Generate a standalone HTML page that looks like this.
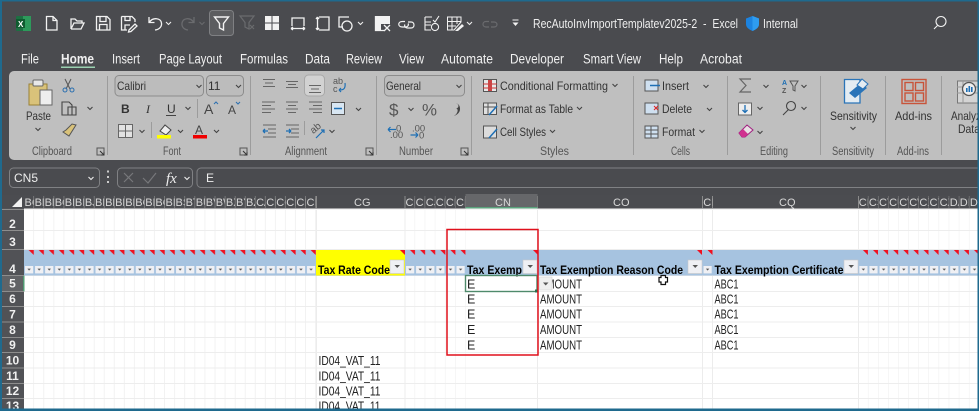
<!DOCTYPE html>
<html><head><meta charset="utf-8"><style>
html,body{margin:0;padding:0;background:#4a4b4f;width:979px;height:411px;overflow:hidden}
svg{display:block}
text{font-family:"Liberation Sans",sans-serif;white-space:pre}
.t{fill:#f0f0f0;font-size:13.5px}
.r{fill:#333;font-size:12px}
.s{fill:#555;font-size:11.5px}
.h{fill:#d8d8d8;font-size:11px}
.n{fill:#f0f0f0;font-size:12px;text-anchor:middle;font-weight:bold}
.c{fill:#222;font-size:12.5px}
.b{fill:#000;font-size:12px;font-weight:bold}
.w{fill:none;stroke:#f2f2f2;stroke-width:1.3}
.k{fill:none;stroke:#444;stroke-width:1.1}
.g{fill:none;stroke:#666;stroke-width:1}
.sep{stroke:#9c9c9c;stroke-width:1}
</style></head><body>
<svg width="979" height="411" viewBox="0 0 979 411" xmlns="http://www.w3.org/2000/svg" style="filter:blur(.3px)">
<defs>
<path id="cv" d="M-2.5-1L0 1.5L2.5-1" fill="none" stroke="#444" stroke-width="1.1"/>
<path id="cw" d="M-2.5-1L0 1.5L2.5-1" fill="none" stroke="#eee" stroke-width="1.1"/>
<g id="lau"><rect x="0" y="0" width="7" height="7" fill="none" stroke="#555"/><path d="M3 3L7 7M7 4V7H4" stroke="#333" fill="none"/></g>
<pattern id="vg" patternUnits="userSpaceOnUse" x="24" y="0" width="10.07" height="10"><rect x="9.4" width=".9" height="10" fill="#ececec"/></pattern>
<pattern id="vh" patternUnits="userSpaceOnUse" x="24" y="0" width="10.07" height="10"><rect x="9.4" width=".9" height="10" fill="#8b8b8b"/></pattern>
<pattern id="tr" patternUnits="userSpaceOnUse" x="24" y="250" width="10.07" height="6"><path d="M4.6 0H9.8V5Z" fill="#f01020"/></pattern>
<pattern id="dd" patternUnits="userSpaceOnUse" x="24" y="265" width="10.07" height="10"><rect x="1" y="1" width="8.2" height="7.4" fill="#eff0f4"/><path d="M3.4 3.6H6.8L5.1 5.6Z" fill="#555"/></pattern>
<pattern id="vg2" patternUnits="userSpaceOnUse" x="405" y="0" width="10.1" height="10"><rect x="9.6" width=".9" height="10" fill="#ececec"/></pattern>
<pattern id="vh2" patternUnits="userSpaceOnUse" x="405" y="0" width="10.1" height="10"><rect x="9.6" width=".9" height="10" fill="#8b8b8b"/></pattern>
<pattern id="tr2" patternUnits="userSpaceOnUse" x="405" y="250" width="10.1" height="6"><path d="M5 0H10V5Z" fill="#f01020"/></pattern>
<pattern id="dd2" patternUnits="userSpaceOnUse" x="405" y="265" width="10.1" height="10"><rect x="1" y="1" width="8.2" height="7.4" fill="#eff0f4"/><path d="M3.4 3.6H6.8L5.1 5.6Z" fill="#555"/></pattern>
<pattern id="vg3" patternUnits="userSpaceOnUse" x="858.3" y="0" width="10.1" height="10"><rect x="9.6" width=".9" height="10" fill="#ececec"/></pattern>
<pattern id="vh3" patternUnits="userSpaceOnUse" x="858.3" y="0" width="10.1" height="10"><rect x="9.6" width=".9" height="10" fill="#8b8b8b"/></pattern>
<pattern id="tr3" patternUnits="userSpaceOnUse" x="858.3" y="250" width="10.1" height="6"><path d="M4.6 0H9.6V5Z" fill="#f01020"/></pattern>
<pattern id="dd3" patternUnits="userSpaceOnUse" x="858.3" y="265" width="10.1" height="10"><rect x="1" y="1" width="8.2" height="7.4" fill="#eff0f4"/><path d="M3.4 3.6H6.8L5.1 5.6Z" fill="#555"/></pattern>
</defs>

<!-- background -->
<rect width="979" height="411" fill="#4a4b4f"/>

<!-- QAT -->
<rect x="16" y="16" width="15" height="15" rx="1" fill="#1d6f42"/><rect x="23" y="16" width="8" height="15" fill="#2d9a5b"/><rect x="16" y="19" width="9" height="9" fill="#0f5c30"/><text x="18" y="27" font-size="8" font-weight="bold" fill="#fff">X</text>
<path class="w" d="M46.5 16.5H53L57 20.5V30H46.5ZM53 16.5V20.5H57"/>
<path class="w" d="M71 29V19H75L77 21H82V23M71 29H81L84 23H74L71 29"/>
<path class="w" d="M96.5 16.5H107L110 19.5V30H96.5ZM100 16.5V21.5H106V16.5M99.5 30V24.5H107V30"/>
<path class="w" d="M121.5 16.5H132L135 19.5V22M125 16.5V20.5H130V16.5M121.5 16.5V30H127M125 30V25H130M129 30L135 24L137 26L131 31.5L128.5 32Z"/>
<path class="w" d="M149 17V22.5H154.5M149.5 22C153 17 161 18 161.5 23C162 27 159 29.5 155 30"/>
<use href="#cw" x="168.5" y="23"/>
<path d="M194 17V22.5H188.5M193.5 22C190 17 183 18 182 23C181.5 27 184 29.5 188 30" fill="none" stroke="#6a6b6e" stroke-width="1.3"/>
<path d="M-2.5-1L0 1.5L2.5-1" transform="translate(202 23)" fill="none" stroke="#6a6b6e"/>
<rect x="209.5" y="10.5" width="24" height="25" rx="3" fill="#5c5d60" stroke="#7f8083"/>
<path d="M214.5 17H228.5L223.5 23.5V30L219.5 28V23.5Z" fill="none" stroke="#f2f2f2" stroke-width="1.4"/>
<path d="M240 16H254L249 22.5V29L245 27V22.5Z M250 25L254 29M254 25L250 29" fill="none" stroke="#6a6b6e" stroke-width="1.2"/>
<path d="M265 16H271.5V22.5H265ZM272.5 16H279V22.5H272.5ZM265 23.5H271.5V30H265ZM272.5 23.5H279V30H272.5Z" fill="#f2f2f2"/>
<path class="w" d="M292 26V18H304V26M291 28.5H305M291 28.5L293 27M291 28.5L293 30M305 28.5L303 27M305 28.5L303 30" stroke-width="1.1"/>
<path class="w" d="M319 17H329V30H319M317.5 17V30M317.5 17L316 19M317.5 17L319 19M317.5 30L316 28M317.5 30L319 28" stroke-width="1.1"/>
<path class="w" d="M349 17H339V27H343" stroke-width="1.1"/><circle cx="347" cy="26" r="5" class="w" stroke-width="1.1"/>
<use href="#cw" x="360.5" y="23"/>
<path d="M375 16H390V24H375Z" fill="#f2f2f2"/><path class="w" d="M375.5 16V30.5H384"/><rect x="376" y="24" width="5" height="6" fill="#f2f2f2"/><path class="w" d="M384 25L390 31M390 25L384 31" stroke-width="1.1"/>
<path d="M405 21.5H402.5C397.5 21.5 397.5 27 402.5 27H405C408 27 409 25 408 23.5M408 22H411C415 22 415 28 411 28H408C405 28 404 26 405 24.5" fill="none" stroke="#f2f2f2" stroke-width="1.2"/>
<path d="M425 17H432M425 17V22H431M425 25H431M425 22V30H431M433 20L435 22L439 16" fill="none" stroke="#f2f2f2" stroke-width="1.1"/><circle cx="435" cy="27" r="3.6" fill="none" stroke="#f2f2f2" stroke-width="1.1"/>
<path d="M447.5 17H461V22L454 30H447.5ZM452 17V30M457 17V24M447.5 21.5H461M447.5 26H456" fill="none" stroke="#f2f2f2" stroke-width="1"/><path d="M455 31L462 24L464 26L458 31Z" fill="#f2f2f2"/>
<use href="#cw" x="469.5" y="23"/>
<path d="M489 21.5H486C482 21.5 482 27 486 27H489M491 22H494C498 22 498 27 494 27H491" fill="none" stroke="#6a6b6e" stroke-width="1.2"/>
<path d="M512.5 20H518.5" fill="none" stroke="#f2f2f2" stroke-width="1"/><path d="M512.5 22.5H518.5L515.5 26Z" fill="#f2f2f2"/>
<text x="533" y="28" font-size="12.5" fill="#eee" textLength="205" lengthAdjust="spacingAndGlyphs">RecAutoInvImportTemplatev2025-2  -  Excel</text>
<path d="M746 18.5L752.5 16L759 18.5V24C759 27.5 756 29.5 752.5 31C749 29.5 746 27.5 746 24Z" fill="#1c83e0"/><path d="M752.5 16L759 18.5V24C759 27.5 756 29.5 752.5 31Z" fill="#2e9cf0"/>
<text x="763" y="28" font-size="12.5" fill="#eee" textLength="35" lengthAdjust="spacingAndGlyphs">Internal</text>
<circle cx="941" cy="21.5" r="5" fill="none" stroke="#f2f2f2" stroke-width="1.1"/><path d="M937.5 25.5L934 29" fill="none" stroke="#f2f2f2" stroke-width="1.1"/>

<!-- Tabs -->
<text class="t" x="21" y="63.5" textLength="18" lengthAdjust="spacingAndGlyphs">File</text>
<text class="t" x="61" y="63.5" textLength="33" lengthAdjust="spacingAndGlyphs" style="font-weight:bold">Home</text>
<rect x="61" y="66.5" width="34" height="1.5" fill="#9ad0b0"/>
<text class="t" x="112" y="63.5" textLength="28" lengthAdjust="spacingAndGlyphs">Insert</text>
<text class="t" x="159" y="63.5" textLength="63" lengthAdjust="spacingAndGlyphs">Page Layout</text>
<text class="t" x="240" y="63.5" textLength="48" lengthAdjust="spacingAndGlyphs">Formulas</text>
<text class="t" x="305" y="63.5" textLength="25" lengthAdjust="spacingAndGlyphs">Data</text>
<text class="t" x="346" y="63.5" textLength="36" lengthAdjust="spacingAndGlyphs">Review</text>
<text class="t" x="399" y="63.5" textLength="25" lengthAdjust="spacingAndGlyphs">View</text>
<text class="t" x="441" y="63.5" textLength="52" lengthAdjust="spacingAndGlyphs">Automate</text>
<text class="t" x="510" y="63.5" textLength="54" lengthAdjust="spacingAndGlyphs">Developer</text>
<text class="t" x="583" y="63.5" textLength="58" lengthAdjust="spacingAndGlyphs">Smart View</text>
<text class="t" x="659" y="63.5" textLength="24" lengthAdjust="spacingAndGlyphs">Help</text>
<text class="t" x="700" y="63.5" textLength="42" lengthAdjust="spacingAndGlyphs">Acrobat</text>

<!-- Ribbon -->
<rect x="9" y="71" width="980" height="89" rx="5" fill="#bfbfbf"/>
<g class="sep">
<path d="M107.5 76V155M250.5 76V155M376.5 76V155M471.5 76V155M633.5 76V155M727.5 76V155M820.5 76V155M885.5 76V155M941.5 76V155M197.5 99V118M151.5 122V138M304.5 121V135"/>
</g>
<!-- Clipboard -->
<rect x="29" y="84" width="18" height="21" fill="#d9c27a" stroke="#9a8236"/><rect x="33" y="80" width="10" height="6" rx="1" fill="#e8e8e8" stroke="#666"/><rect x="40" y="90" width="12" height="15" fill="#eee" stroke="#666"/>
<text class="r" x="26" y="120" textLength="25" lengthAdjust="spacingAndGlyphs">Paste</text>
<use href="#cv" x="38" y="129"/>
<path d="M65 79L70 89M71 79L66 89" stroke="#555" fill="none"/><circle cx="65" cy="90" r="2" fill="none" stroke="#2a6fb0"/><circle cx="72" cy="90" r="2" fill="none" stroke="#2a6fb0"/>
<path class="k" d="M62 102H69L72 105V115H62Z M68 107H76V115H68Z"/>
<use href="#cv" x="90" y="108"/>
<path d="M63 132L69 136L76 125L72 124L66 130Z" fill="#d9c27a" stroke="#555"/>
<text class="s" x="32" y="155" textLength="40" lengthAdjust="spacingAndGlyphs">Clipboard</text>
<use href="#lau" x="97" y="148"/>
<!-- Font -->
<rect x="115" y="75.5" width="88.5" height="20.5" rx="4" fill="#bcbcbc" stroke="#8c8c8c"/>
<text class="r" x="117" y="90" textLength="29" lengthAdjust="spacingAndGlyphs">Calibri</text><use href="#cv" x="199" y="86"/>
<rect x="206.5" y="75.5" width="37" height="20.5" rx="4" fill="#bcbcbc" stroke="#8c8c8c"/>
<text class="r" x="208" y="90">11</text><use href="#cv" x="238.5" y="86"/>
<text class="r" x="121" y="113" style="font-weight:bold">B</text>
<text class="r" x="146" y="113" style="font-style:italic;font-family:'Liberation Serif'">I</text>
<text class="r" x="167" y="113">U</text><path d="M166 115.5H176" stroke="#444"/>
<use href="#cv" x="188" y="108"/>
<text x="204" y="114" font-size="14" fill="#444">A</text><path d="M214 104L216 102L218 104" stroke="#2a6fb0" fill="none"/>
<text x="228" y="114" font-size="12" fill="#444">A</text><path d="M236 102L238 104L240 102" stroke="#2a6fb0" fill="none"/>
<rect x="118.5" y="124.5" width="14" height="13" fill="#e2e2e2" stroke="#666"/><path d="M125.5 124.5V137.5M118.5 131H132.5" stroke="#666"/>
<use href="#cv" x="142" y="131"/>
<path d="M160 131L165 125L171 130L166 135Z" fill="#eee" stroke="#444"/>
<rect x="157" y="135" width="14" height="3.5" fill="#ffff00"/><use href="#cv" x="180.5" y="131"/>
<text x="195" y="134" font-size="12" fill="#444">A</text><rect x="193" y="135" width="14" height="3.5" fill="#f00000"/><use href="#cv" x="216.5" y="131"/>
<text class="s" x="163" y="155" textLength="18" lengthAdjust="spacingAndGlyphs">Font</text>
<use href="#lau" x="240" y="148"/>
<!-- Alignment -->
<rect x="304.5" y="75" width="20" height="21" rx="4" fill="#d2d2d2" stroke="#a8a8a8"/>
<path class="g" d="M263 79.5H275M265 83H273M263 86.5H275M286 81.5H298M288 84.5H296M286 87.5H298M309 85.5H321M311 89H319M309 92.5H321"/>
<path class="g" d="M262 102H275M262 105.5H271M262 109H275M262 112.5H271M286 102H298M288 105.5H296M286 109H298M288 112.5H296M309 102H322M313 105.5H322M309 109H322M313 112.5H322"/>
<path class="g" d="M263 125H276M268 129H276M268 133H276M263 137H276M286 125H299M291 129H299M291 133H299M286 137H299"/>
<path d="M268 131H263M263 131L265 129M263 131L265 133" stroke="#1d6fb5" fill="none" stroke-width="1.3"/><path d="M286 131H291M291 131L289 129M291 131L289 133" stroke="#1d6fb5" fill="none" stroke-width="1.3"/>
<text x="333" y="84" font-size="9" fill="#555">ab</text><text x="333" y="92" font-size="9" fill="#555">c</text><path d="M345 83C346 90 342 90 339 90M339 90L341 88M339 90L341 92" stroke="#1d6fb5" fill="none" stroke-width="1.2"/>
<rect x="331.5" y="102.5" width="13" height="12" fill="#d8e6f2" stroke="#555"/><path d="M334 108.5H342" stroke="#1d6fb5" stroke-width="1.5"/>
<use href="#cv" x="358.5" y="109"/>
<text x="311" y="132" font-size="10" fill="#555" transform="rotate(-40 315 130)">ab</text><path d="M316 138L324 130M321 130H324V133" stroke="#1d6fb5" fill="none" stroke-width="1.2"/>
<use href="#cv" x="332" y="131"/>
<text class="s" x="285" y="155" textLength="42" lengthAdjust="spacingAndGlyphs">Alignment</text>
<use href="#lau" x="366" y="148"/>
<!-- Number -->
<rect x="384.5" y="75.5" width="80" height="20.5" rx="4" fill="#bcbcbc" stroke="#8c8c8c"/>
<text class="r" x="386" y="90" textLength="35" lengthAdjust="spacingAndGlyphs">General</text><use href="#cv" x="459" y="86"/>
<text x="389" y="115.5" font-size="17" fill="#555">$</text><use href="#cv" x="411" y="109"/>
<text x="422" y="115.5" font-size="17" fill="#555" textLength="15" lengthAdjust="spacingAndGlyphs">%</text>
<path d="M456 103.5A2.5 2.5 0 1 1 455.9 108.5C458.5 108.5 458.5 113 454 116C459.5 114 461 110 459.5 106C458.5 104 457 103.5 456 103.5Z" fill="#444"/>
<text x="396" y="131.5" font-size="9.5" fill="#555">0</text><text x="390" y="138" font-size="9.5" fill="#555">.00</text>
<path d="M388 129.5H396M388 129.5L390.5 127M388 129.5L390.5 132" stroke="#1d6fb5" fill="none" stroke-width="1.2"/>
<text x="412" y="131.5" font-size="9.5" fill="#555">.00</text><text x="419" y="138.5" font-size="9.5" fill="#555">0</text>
<path d="M410.5 135H418M418 135L415.5 132.5M418 135L415.5 137.5" stroke="#1d6fb5" fill="none" stroke-width="1.2"/>
<text class="s" x="399" y="155" textLength="34" lengthAdjust="spacingAndGlyphs">Number</text>
<use href="#lau" x="461" y="148"/>
<!-- Styles -->
<rect x="483.5" y="79.5" width="13" height="12" fill="#e8e8e8" stroke="#555"/><path d="M483 84H497M483 88H497" stroke="#c33"/><rect x="488" y="80" width="4" height="11" fill="#c44"/>
<text class="r" x="500" y="90" textLength="108" lengthAdjust="spacingAndGlyphs">Conditional Formatting</text><use href="#cv" x="615" y="85"/>
<rect x="483.5" y="103" width="13" height="11.5" fill="#e0e0e0" stroke="#555"/><path d="M483 107H497M488 103V114" stroke="#555"/><path d="M489 115L497 106" stroke="#1d6fb5" stroke-width="1.5"/>
<text class="r" x="500" y="113" textLength="73" lengthAdjust="spacingAndGlyphs">Format as Table</text><use href="#cv" x="579.5" y="108"/>
<rect x="483.5" y="126" width="13" height="12" fill="#dcdcdc" stroke="#555"/><path d="M489 138L497 129" stroke="#1d6fb5" stroke-width="1.5"/>
<text class="r" x="500" y="136" textLength="46" lengthAdjust="spacingAndGlyphs">Cell Styles</text><use href="#cv" x="552.5" y="131"/>
<text class="s" x="540" y="155" textLength="29" lengthAdjust="spacingAndGlyphs">Styles</text>
<!-- Cells -->
<rect x="645" y="80" width="13" height="11" fill="#cfe0f0" stroke="#555"/><path d="M650 85.5H660" stroke="#1d6fb5" stroke-width="1.5"/>
<text class="r" x="662" y="90" textLength="27" lengthAdjust="spacingAndGlyphs">Insert</text><use href="#cv" x="706" y="86"/>
<rect x="645" y="103" width="13" height="11" fill="#cfe0f0" stroke="#555"/><path d="M654 106L658 110M658 106L654 110" stroke="#d22"/>
<text class="r" x="662" y="113" textLength="30" lengthAdjust="spacingAndGlyphs">Delete</text><use href="#cv" x="709.5" y="109"/>
<rect x="645" y="126" width="13" height="12" fill="#cfe0f0" stroke="#555"/><path d="M645 130H658M645 134H658M651 126V138" stroke="#555"/>
<text class="r" x="662" y="136" textLength="33" lengthAdjust="spacingAndGlyphs">Format</text><use href="#cv" x="702" y="131"/>
<text class="s" x="671" y="155" textLength="19" lengthAdjust="spacingAndGlyphs">Cells</text>
<!-- Editing -->
<path d="M751 79H740L746 85.5L740 92H751" fill="none" stroke="#666" stroke-width="1.2"/><use href="#cv" x="766" y="86"/>
<text x="782" y="85" font-size="7" fill="#1d6fb5" font-weight="bold">A</text><text x="782" y="93" font-size="7" fill="#555" font-weight="bold">Z</text>
<path d="M790 81H798L795 86V91L793 90V86Z" fill="none" stroke="#555"/><use href="#cv" x="804" y="86"/>
<rect x="738.5" y="103" width="13" height="12" fill="#eee" stroke="#666"/><path d="M745 105V112M742.5 110L745 112.5L747.5 110" stroke="#1d6fb5" fill="none" stroke-width="1.3"/><use href="#cv" x="760" y="108"/>
<circle cx="791" cy="106" r="4.5" class="k"/><path class="k" d="M788 110L783 115"/><use href="#cv" x="804" y="108"/>
<path d="M739 133L747 125L753 130L745 137L742 137Z" fill="#e8e0e4" stroke="#a02080"/><path d="M739 133L743 129L748 134L745 137H742Z" fill="#d0308f"/><use href="#cv" x="760" y="132"/>
<text class="s" x="760" y="155" textLength="28" lengthAdjust="spacingAndGlyphs">Editing</text>
<!-- Sensitivity -->
<path d="M844.5 79.5H860V103H844.5Z" fill="#e4ecf2" stroke="#2a74b8" stroke-width="1.3"/>
<path d="M849 93L861 83L867 88L855 98Z" fill="#2a74b8"/><path d="M857 85L862 79L868 84L863 89Z" fill="#e4ecf2" stroke="#2a74b8"/>
<text class="r" x="830" y="120" textLength="47" lengthAdjust="spacingAndGlyphs">Sensitivity</text><use href="#cv" x="853" y="128"/>
<text class="s" x="832" y="155" textLength="42" lengthAdjust="spacingAndGlyphs">Sensitivity</text>
<!-- Add-ins -->
<g fill="none" stroke="#c8543a" stroke-width="1.4"><rect x="902" y="79.5" width="24" height="24"/><rect x="905" y="82.5" width="8" height="8"/><rect x="915.5" y="82.5" width="8" height="8"/><rect x="905" y="93" width="8" height="8"/><rect x="915.5" y="93" width="8" height="8"/></g>
<text class="r" x="895" y="120" textLength="37" lengthAdjust="spacingAndGlyphs">Add-ins</text>
<text class="s" x="897" y="155" textLength="32" lengthAdjust="spacingAndGlyphs">Add-ins</text>
<!-- Analyze -->
<rect x="957.5" y="81" width="22" height="22" fill="#d4d4d4" stroke="#777"/><path d="M957 87H979M957 93H979M963 81V103" stroke="#999"/>
<circle cx="969" cy="89" r="6.5" fill="#eee" stroke="#555" stroke-width="1.3"/><rect x="966" y="88" width="1.6" height="4" fill="#1d6fb5"/><rect x="968.5" y="86" width="1.6" height="6" fill="#1d6fb5"/><rect x="971" y="87" width="1.6" height="5" fill="#1d6fb5"/>
<text class="r" x="951" y="120" textLength="30" lengthAdjust="spacingAndGlyphs">Analyz</text>
<text class="r" x="958" y="133" textLength="22" lengthAdjust="spacingAndGlyphs">Data</text>

<!-- Formula bar -->
<rect x="9.5" y="168" width="90" height="19.5" rx="4" fill="#4a4b4f" stroke="#808184"/>
<text x="14" y="182" font-size="12" fill="#eee">CN5</text><use href="#cw" x="91" y="178"/>
<rect x="107" y="170.5" width="2" height="2" fill="#ccc"/><rect x="107" y="176" width="2" height="2" fill="#ccc"/><rect x="107" y="181" width="2" height="2" fill="#ccc"/>
<rect x="117.5" y="168" width="75" height="19.5" rx="4" fill="#4a4b4f" stroke="#808184"/>
<path d="M124 173L133 182M133 173L124 182" stroke="#77787b" fill="none" stroke-width="1.2"/>
<path d="M143 178L148 183L156 173" stroke="#77787b" fill="none" stroke-width="1.2"/>
<text x="166" y="183" font-size="15" fill="#eee" style="font-family:'Liberation Serif';font-style:italic">fx</text><use href="#cw" x="187" y="178"/>
<rect x="197" y="168" width="790" height="19.5" rx="4" fill="#4a4b4f" stroke="#808184"/>
<text x="206" y="182" font-size="12" fill="#eee">E</text>

<!-- Sheet -->
<rect x="24" y="209" width="955" height="200" fill="#fff"/>
<rect x="24" y="209" width="292" height="200" fill="url(#vg)"/>
<rect x="405" y="209" width="60.5" height="200" fill="url(#vg2)"/>
<rect x="858.3" y="209" width="121" height="200" fill="url(#vg3)"/>
<path d="M537.5 209V411M702.5 209V411M712.5 209V411M858.5 209V411M316.5 209V411M405 209V411" stroke="#ececec" fill="none"/>
<path d="M24 230.5H979M24 249.5H979M24 291.5H979M24 306.5H979M24 322H979M24 337.5H979M24 352.5H979M24 368H979M24 383.5H979M24 398.5H979" stroke="#ededed" fill="none"/>
<rect x="24" y="208" width="955" height="2" fill="#f4f4f4"/>

<!-- column headers -->
<rect x="2" y="195" width="977" height="13.5" fill="#4b4c50"/>
<rect x="24" y="196" width="292" height="12" fill="url(#vh)"/>
<rect x="405" y="196" width="60.5" height="12" fill="url(#vh2)"/>
<rect x="858.3" y="196" width="121" height="12" fill="url(#vh3)"/>
<path d="M316.5 196V208M537.5 196V208M702.5 196V208M712.5 196V208M858.5 196V208M405 196V208" stroke="#8b8b8b"/>
<rect x="465.5" y="194" width="72" height="14" fill="#66676a"/><rect x="465.5" y="207" width="72" height="1.5" fill="#5aa27c"/>
<path d="M12 207L22 197V207Z" fill="#f2f2f2"/>
<svg x="24" y="196" width="9.5" height="12"><text class="h" x=".5" y="10">BC</text></svg>
<svg x="34.1" y="196" width="9.5" height="12"><text class="h" x=".5" y="10">BE</text></svg>
<svg x="44.1" y="196" width="9.5" height="12"><text class="h" x=".5" y="10">BF</text></svg>
<svg x="54.2" y="196" width="9.5" height="12"><text class="h" x=".5" y="10">BG</text></svg>
<svg x="64.3" y="196" width="9.5" height="12"><text class="h" x=".5" y="10">BH</text></svg>
<svg x="74.4" y="196" width="9.5" height="12"><text class="h" x=".5" y="10">BI</text></svg>
<svg x="84.4" y="196" width="9.5" height="12"><text class="h" x=".5" y="10">BJ</text></svg>
<svg x="94.5" y="196" width="9.5" height="12"><text class="h" x=".5" y="10">BK</text></svg>
<svg x="104.6" y="196" width="9.5" height="12"><text class="h" x=".5" y="10">BL</text></svg>
<svg x="114.6" y="196" width="9.5" height="12"><text class="h" x=".5" y="10">BM</text></svg>
<svg x="124.7" y="196" width="9.5" height="12"><text class="h" x=".5" y="10">BN</text></svg>
<svg x="134.8" y="196" width="9.5" height="12"><text class="h" x=".5" y="10">BO</text></svg>
<svg x="144.8" y="196" width="9.5" height="12"><text class="h" x=".5" y="10">BP</text></svg>
<svg x="154.9" y="196" width="9.5" height="12"><text class="h" x=".5" y="10">BQ</text></svg>
<svg x="165" y="196" width="9.5" height="12"><text class="h" x=".5" y="10">BR</text></svg>
<svg x="175" y="196" width="9.5" height="12"><text class="h" x=".5" y="10">BS</text></svg>
<svg x="185.1" y="196" width="9.5" height="12"><text class="h" x=".5" y="10">BT</text></svg>
<svg x="195.2" y="196" width="9.5" height="12"><text class="h" x=".5" y="10">BU</text></svg>
<svg x="205.3" y="196" width="9.5" height="12"><text class="h" x=".5" y="10">BV</text></svg>
<svg x="215.3" y="196" width="9.5" height="12"><text class="h" x=".5" y="10">BW</text></svg>
<svg x="225.4" y="196" width="9.5" height="12"><text class="h" x=".5" y="10">BX</text></svg>
<svg x="235.5" y="196" width="9.5" height="12"><text class="h" x=".5" y="10">BY</text></svg>
<svg x="245.5" y="196" width="9.5" height="12"><text class="h" x=".5" y="10">BZ</text></svg>
<svg x="255.6" y="196" width="9.5" height="12"><text class="h" x=".5" y="10">CA</text></svg>
<svg x="265.7" y="196" width="9.5" height="12"><text class="h" x=".5" y="10">CB</text></svg>
<svg x="275.8" y="196" width="9.5" height="12"><text class="h" x=".5" y="10">CC</text></svg>
<svg x="285.8" y="196" width="9.5" height="12"><text class="h" x=".5" y="10">CD</text></svg>
<svg x="295.9" y="196" width="9.5" height="12"><text class="h" x=".5" y="10">CE</text></svg>
<svg x="306" y="196" width="9.5" height="12"><text class="h" x=".5" y="10">CF</text></svg>
<text class="h" x="354" y="206">CG</text>
<svg x="405" y="196" width="9.5" height="12"><text class="h" x=".5" y="10">CH</text></svg>
<svg x="415.1" y="196" width="9.5" height="12"><text class="h" x=".5" y="10">CI</text></svg>
<svg x="425.2" y="196" width="9.5" height="12"><text class="h" x=".5" y="10">CJ</text></svg>
<svg x="435.3" y="196" width="9.5" height="12"><text class="h" x=".5" y="10">CK</text></svg>
<svg x="445.4" y="196" width="9.5" height="12"><text class="h" x=".5" y="10">CL</text></svg>
<svg x="455.5" y="196" width="9.5" height="12"><text class="h" x=".5" y="10">CM</text></svg>
<text class="h" x="495" y="206">CN</text>
<text class="h" x="613" y="206">CO</text>
<svg x="702.7" y="196" width="9.5" height="12"><text class="h" x=".5" y="10">CP</text></svg>
<text class="h" x="779" y="206">CQ</text>
<svg x="858.3" y="196" width="9.5" height="12"><text class="h" x=".5" y="10">CR</text></svg>
<svg x="868.4" y="196" width="9.5" height="12"><text class="h" x=".5" y="10">CS</text></svg>
<svg x="878.5" y="196" width="9.5" height="12"><text class="h" x=".5" y="10">CT</text></svg>
<svg x="888.6" y="196" width="9.5" height="12"><text class="h" x=".5" y="10">CU</text></svg>
<svg x="898.7" y="196" width="9.5" height="12"><text class="h" x=".5" y="10">CV</text></svg>
<svg x="908.8" y="196" width="9.5" height="12"><text class="h" x=".5" y="10">CW</text></svg>
<svg x="918.9" y="196" width="9.5" height="12"><text class="h" x=".5" y="10">CX</text></svg>
<svg x="929" y="196" width="9.5" height="12"><text class="h" x=".5" y="10">CY</text></svg>
<svg x="939.1" y="196" width="9.5" height="12"><text class="h" x=".5" y="10">CZ</text></svg>
<svg x="949.2" y="196" width="9.5" height="12"><text class="h" x=".5" y="10">DA</text></svg>
<svg x="959.3" y="196" width="9.5" height="12"><text class="h" x=".5" y="10">DB</text></svg>
<svg x="969.4" y="196" width="9.5" height="12"><text class="h" x=".5" y="10">DC</text></svg>

<!-- Row 4 band -->
<rect x="24" y="250" width="955" height="25.5" fill="#a6c3e0"/>
<rect x="24" y="275" width="955" height="1" fill="#c9d6e4"/>
<rect x="316" y="250" width="89" height="25.5" fill="#ffff00"/>
<rect x="24" y="250" width="292" height="6" fill="url(#tr)"/>
<rect x="405" y="250" width="60.5" height="6" fill="url(#tr2)"/>
<rect x="858.3" y="250" width="121" height="6" fill="url(#tr3)"/>
<path d="M400 250H405V255ZM533 250H538V255ZM697 250H702V255ZM707.5 250H712.5V255Z" fill="#f01020"/>
<rect x="24" y="265" width="292" height="10" fill="url(#dd)"/>
<rect x="405" y="265" width="60.5" height="10" fill="url(#dd2)"/>
<rect x="858.3" y="265" width="121" height="10" fill="url(#dd3)"/>
<!-- filter buttons -->
<rect x="390" y="260" width="14" height="13.5" fill="#eff0f4" stroke="#c8c8c8" stroke-width=".6"/><path d="M394.5 265H400L397.2 268Z" fill="#555"/>
<rect x="523" y="260" width="14" height="13.5" fill="#eff0f4" stroke="#c8c8c8" stroke-width=".6"/><path d="M527.5 265H533L530.2 268Z" fill="#555"/>
<rect x="688" y="260" width="14" height="13.5" fill="#eff0f4" stroke="#c8c8c8" stroke-width=".6"/><path d="M692.5 265H698L695.2 268Z" fill="#555"/>
<rect x="844" y="260" width="14" height="13.5" fill="#eff0f4" stroke="#c8c8c8" stroke-width=".6"/><path d="M848.5 265H854L851.2 268Z" fill="#555"/>
<rect x="703.5" y="266" width="8.2" height="7.4" fill="#eff0f4"/><path d="M705.9 268.6H709.3L707.6 270.6Z" fill="#555"/>
<text class="b" x="318" y="274" textLength="72" lengthAdjust="spacingAndGlyphs">Tax Rate Code</text>
<text class="b" x="467" y="274" textLength="55" lengthAdjust="spacingAndGlyphs">Tax Exemp</text>
<text class="b" x="540" y="274" textLength="143" lengthAdjust="spacingAndGlyphs">Tax Exemption Reason Code</text>
<text class="b" x="714.5" y="274" textLength="129" lengthAdjust="spacingAndGlyphs">Tax Exemption Certificate</text>

<!-- Cells -->
<text class="c" x="467" y="288.5">E</text><text class="c" x="540" y="288.5" textLength="42" lengthAdjust="spacingAndGlyphs">AMOUNT</text><text class="c" x="714.5" y="288.5" textLength="24" lengthAdjust="spacingAndGlyphs">ABC1</text>
<text class="c" x="467" y="303.5">E</text><text class="c" x="540" y="303.5" textLength="42" lengthAdjust="spacingAndGlyphs">AMOUNT</text><text class="c" x="714.5" y="303.5" textLength="24" lengthAdjust="spacingAndGlyphs">ABC1</text>
<text class="c" x="467" y="318.5">E</text><text class="c" x="540" y="318.5" textLength="42" lengthAdjust="spacingAndGlyphs">AMOUNT</text><text class="c" x="714.5" y="318.5" textLength="24" lengthAdjust="spacingAndGlyphs">ABC1</text>
<text class="c" x="467" y="334">E</text><text class="c" x="540" y="334" textLength="42" lengthAdjust="spacingAndGlyphs">AMOUNT</text><text class="c" x="714.5" y="334" textLength="24" lengthAdjust="spacingAndGlyphs">ABC1</text>
<text class="c" x="467" y="349.5">E</text><text class="c" x="540" y="349.5" textLength="42" lengthAdjust="spacingAndGlyphs">AMOUNT</text><text class="c" x="714.5" y="349.5" textLength="24" lengthAdjust="spacingAndGlyphs">ABC1</text>
<text class="c" x="318.5" y="365" textLength="62" lengthAdjust="spacingAndGlyphs">ID04_VAT_11</text>
<text class="c" x="318.5" y="380.5" textLength="62" lengthAdjust="spacingAndGlyphs">ID04_VAT_11</text>
<text class="c" x="318.5" y="395.5" textLength="62" lengthAdjust="spacingAndGlyphs">ID04_VAT_11</text>
<text class="c" x="318.5" y="410.5" textLength="62" lengthAdjust="spacingAndGlyphs">ID04_VAT_11</text>

<!-- Selection -->
<rect x="465.5" y="275.5" width="71.5" height="16" fill="none" stroke="#4f8a6b" stroke-width="1.4"/>
<rect x="535" y="289.5" width="3" height="3" fill="#2f6f4f"/>
<rect x="539.5" y="277" width="12.5" height="13" fill="#efefef" stroke="#d4d4d4" stroke-width=".6"/><path d="M543 282.5H548.5L545.7 285.5Z" fill="#555"/>
<!-- Red annotation -->
<rect x="447" y="229.5" width="91" height="125.5" fill="none" stroke="#e0101c" stroke-width="1.5"/>
<!-- Cursor -->
<path d="M661 275.5H665.5V277.5H667.5V282H665.5V284.5H661V282H659V277.5H661Z" fill="#fff" stroke="#111" stroke-width="1.2"/>

<!-- Row headers -->
<rect x="2" y="208" width="22" height="203" fill="#515256"/>
<rect x="2" y="275.5" width="22" height="16" fill="#626366"/><rect x="23" y="275.5" width="1.5" height="16" fill="#4f9a72"/>
<path d="M2 209.5H24M2 230.5H24M2 249.5H24M2 275.5H24M2 291.5H24M2 306.5H24M2 322H24M2 337.5H24M2 352.5H24M2 368H24M2 383.5H24M2 398.5H24" stroke="#8d8d8d" fill="none"/>
<text class="n" x="12.5" y="228">2</text>
<text class="n" x="12.5" y="246">3</text>
<text class="n" x="12.5" y="273">4</text>
<text class="n" x="12.5" y="287.5">5</text>
<text class="n" x="12.5" y="303">6</text>
<text class="n" x="12.5" y="318.5">7</text>
<text class="n" x="12.5" y="334">8</text>
<text class="n" x="12.5" y="349">9</text>
<text class="n" x="12.5" y="364.5">10</text>
<text class="n" x="12.5" y="380">11</text>
<text class="n" x="12.5" y="395">12</text>
<text class="n" x="12.5" y="410">13</text>

<!-- Outer teal border -->
<rect x="0" y="0" width="979" height="1.5" fill="#1f6a8e"/>
<rect x="0" y="0" width="2" height="411" fill="#1f6a8e"/>
<rect x="977.5" y="0" width="1.5" height="411" fill="#1f6a8e"/>
<rect x="0" y="408.5" width="979" height="2.5" fill="#1f6a8e"/>
</svg>
</body></html>
